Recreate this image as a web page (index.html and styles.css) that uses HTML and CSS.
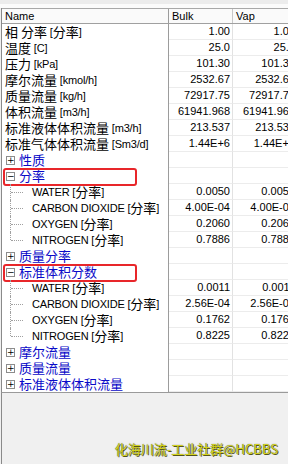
FILE: index.html
```html
<!DOCTYPE html>
<html lang="zh">
<head>
  <meta charset="UTF-8">
  <meta name="viewport" content="width=device-width, initial-scale=1.0">
  <title>Stream Properties</title>
  <link rel="stylesheet" href="styles.css">
</head>
<body>
  <div class="window">
    <div class="topbar"></div>

    <div class="table">
      <div class="row head">
        <div class="name">Name</div>
        <div class="val">Bulk</div>
        <div class="val">Vap</div>
      </div>

      <div class="row"><div class="name"><span class="zh">相 分率</span> [<span class="zh">分率</span>]</div><div class="val">1.00</div><div class="val">1.00</div></div>
      <div class="row"><div class="name"><span class="zh">温度</span> [C]</div><div class="val">25.0</div><div class="val">25.0</div></div>
      <div class="row"><div class="name"><span class="zh">压力</span> [kPa]</div><div class="val">101.30</div><div class="val">101.30</div></div>
      <div class="row"><div class="name"><span class="zh">摩尔流量</span> [kmol/h]</div><div class="val">2532.67</div><div class="val">2532.67</div></div>
      <div class="row"><div class="name"><span class="zh">质量流量</span> [kg/h]</div><div class="val">72917.75</div><div class="val">72917.75</div></div>
      <div class="row"><div class="name"><span class="zh">体积流量</span> [m3/h]</div><div class="val">61941.968</div><div class="val">61941.968</div></div>
      <div class="row"><div class="name"><span class="zh">标准液体体积流量</span> [m3/h]</div><div class="val">213.537</div><div class="val">213.537</div></div>
      <div class="row"><div class="name"><span class="zh">标准气体体积流量</span> [Sm3/d]</div><div class="val">1.44E+6</div><div class="val">1.44E+6</div></div>

      <div class="row"><div class="name group"><span class="box">+</span><span class="zh">性质</span></div><div class="val"></div><div class="val"></div></div>
      <div class="row"><div class="name group"><span class="box">&minus;</span><span class="zh">分率</span><span class="mark-box"></span></div><div class="val"></div><div class="val"></div></div>
      <div class="row"><div class="name"><span class="twig"></span>WATER [<span class="zh">分率</span>]</div><div class="val">0.0050</div><div class="val">0.0050</div></div>
      <div class="row"><div class="name"><span class="twig"></span>CARBON DIOXIDE [<span class="zh">分率</span>]</div><div class="val">4.00E-04</div><div class="val">4.00E-04</div></div>
      <div class="row"><div class="name"><span class="twig"></span>OXYGEN [<span class="zh">分率</span>]</div><div class="val">0.2060</div><div class="val">0.2060</div></div>
      <div class="row"><div class="name"><span class="twig last"></span>NITROGEN [<span class="zh">分率</span>]</div><div class="val">0.7886</div><div class="val">0.7886</div></div>

      <div class="row"><div class="name group"><span class="box">+</span><span class="zh">质量分率</span></div><div class="val"></div><div class="val"></div></div>
      <div class="row"><div class="name group"><span class="box">&minus;</span><span class="zh">标准体积分数</span><span class="mark-box"></span></div><div class="val"></div><div class="val"></div></div>
      <div class="row"><div class="name"><span class="twig"></span>WATER [<span class="zh">分率</span>]</div><div class="val">0.0011</div><div class="val">0.0011</div></div>
      <div class="row"><div class="name"><span class="twig"></span>CARBON DIOXIDE [<span class="zh">分率</span>]</div><div class="val">2.56E-04</div><div class="val">2.56E-04</div></div>
      <div class="row"><div class="name"><span class="twig"></span>OXYGEN [<span class="zh">分率</span>]</div><div class="val">0.1762</div><div class="val">0.1762</div></div>
      <div class="row"><div class="name"><span class="twig last"></span>NITROGEN [<span class="zh">分率</span>]</div><div class="val">0.8225</div><div class="val">0.8225</div></div>

      <div class="row"><div class="name group"><span class="box">+</span><span class="zh">摩尔流量</span></div><div class="val"></div><div class="val"></div></div>
      <div class="row"><div class="name group"><span class="box">+</span><span class="zh">质量流量</span></div><div class="val"></div><div class="val"></div></div>
      <div class="row"><div class="name group"><span class="box">+</span><span class="zh">标准液体体积流量</span></div><div class="val"></div><div class="val"></div></div>
    </div>

    <div class="footer">
      <span class="watermark">化海川流-工业社群@HCBBS</span>
    </div>
  </div>
</body>
</html>
```

FILE: styles.css
```css
body {
  margin: 0;
  background: #f0f0f0;
  font-family: "Liberation Sans", "Noto Sans CJK SC", sans-serif;
  font-size: 11px;
  color: #000;
  overflow: hidden;
}

.window {
  width: 288px;
  height: 464px;
  overflow: hidden;
}

.topbar {
  height: 8px;
  background: linear-gradient(#ececec 0, #ececec 4px, #fbfbfb 4px);
}

.table {
  width: 296px;
  margin-left: 1px;
  border-left: 1px solid #8a8a8a;
  background: #fff;
}

.row {
  display: grid;
  grid-template-columns: 167px 64px 65px;
  height: 16px;
}

.name {
  position: relative;
  padding-left: 3px;
  white-space: nowrap;
  border-right: 1px solid #9c9c9c;
  line-height: 16px;
  height: 16px;
  letter-spacing: -0.2px;
}

.val {
  padding-right: 2px;
  text-align: right;
  line-height: 15px;
  white-space: nowrap;
  border-right: 1px solid #e2e2e2;
  border-bottom: 1px solid #ececec;
}

.row.head {
  background: #fafafa;
  border-top: 1px solid #a8a8a8;
  border-bottom: 1px solid #a0a0a0;
  box-sizing: border-box;
}

.row.head .name,
.row.head .val {
  height: 14px;
  line-height: 14px;
  text-align: left;
  padding-left: 3px;
  border-bottom: none;
  letter-spacing: 0;
}

.row.head .val {
  border-right: 1px solid #c8c8c8;
}

.zh {
  font-family: "Noto Sans CJK SC", sans-serif;
  font-size: 13px;
  line-height: 16px;
  letter-spacing: 0;
  vertical-align: top;
}

.group {
  color: #0a0ac8;
}

.box {
  display: inline-block;
  box-sizing: border-box;
  width: 9px;
  height: 9px;
  margin: 4px 4px 0 1px;
  vertical-align: top;
  border: 1px solid #8c8c8c;
  background: #fff;
  color: #000;
  font-family: "DejaVu Sans", sans-serif;
  font-size: 9px;
  line-height: 6px;
  text-align: center;
  overflow: hidden;
  letter-spacing: 0;
}

.twig {
  position: relative;
  display: inline-block;
  vertical-align: top;
  width: 13px;
  height: 16px;
  margin: 0 9px 0 5px;
}

.twig::before {
  content: "";
  position: absolute;
  left: 0;
  top: 0;
  bottom: 0;
  border-left: 1px dotted #a0a0a0;
}

.twig.last::before {
  bottom: 8px;
}

.twig::after {
  content: "";
  position: absolute;
  left: 1px;
  top: 8px;
  width: 12px;
  border-top: 1px dotted #a0a0a0;
}

.mark-box {
  position: absolute;
  left: 1px;
  top: 0;
  width: 134px;
  height: 18px;
  box-sizing: border-box;
  border: 2px solid #e8262a;
  border-radius: 3px;
}

.footer {
  height: 72px;
  margin-left: 1px;
  border-left: 1px solid #8a8a8a;
  border-top: 1px solid #9a9a9a;
  display: flex;
  justify-content: flex-end;
  align-items: flex-end;
  padding: 0 10px 7px 0;
  box-sizing: border-box;
}

.watermark {
  font-family: "Noto Sans CJK SC", sans-serif;
  font-size: 13px;
  line-height: 16px;
  color: #d2d21e;
  text-shadow: 1px 1px 0 #55551a, 0 0 1px #555;
}
```
